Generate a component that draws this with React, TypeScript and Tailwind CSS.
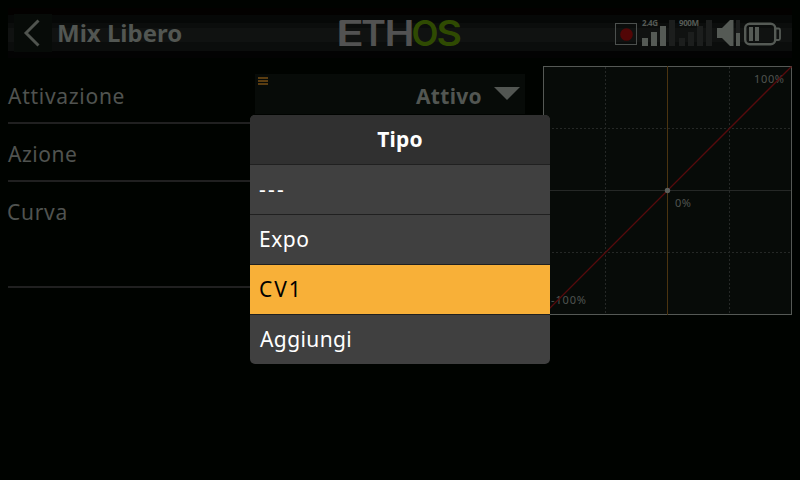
const labelText = "font-['Noto_Sans',sans-serif] text-[21px] leading-[30px] text-[#505350]";

function Logo() {
  return (
    <svg width="128" height="50" viewBox="335 8 128 50" role="img" aria-label="ETHOS">
      <defs>
        <clipPath id="logo-clip">
          <rect x="338" y="20" width="124" height="27" rx="4" />
        </clipPath>
      </defs>
      <g clipPath="url(#logo-clip)" className="font-['Inter',sans-serif] text-[35px] font-semibold">
        <text x="336" y="46" textLength="28" lengthAdjust="spacingAndGlyphs" fill="#525252">E</text>
        <text x="361" y="46" textLength="25" lengthAdjust="spacingAndGlyphs" fill="#525252">T</text>
        <text x="384.5" y="46" textLength="30" lengthAdjust="spacingAndGlyphs" fill="#525252">H</text>
        <text x="411.5" y="46" textLength="27" lengthAdjust="spacingAndGlyphs" fill="#2f4a02">O</text>
        <text x="436.5" y="46" textLength="25.5" lengthAdjust="spacingAndGlyphs" fill="#2f4a02">S</text>
      </g>
    </svg>
  );
}

function StatusIcons() {
  const on = "#555a55";
  const off = "#1c1e1d";
  return (
    <svg width="168" height="38" viewBox="615 13 168 38">
      <rect x="615.5" y="23.5" width="21" height="21" fill="none" stroke="#4c504e" />
      <circle cx="626.5" cy="34.5" r="6.3" fill="#520606" />
      <rect x="642" y="38" width="6" height="8" fill={on} />
      <rect x="651" y="32" width="6" height="14" fill={on} />
      <rect x="660" y="26" width="6" height="20" fill={on} />
      <rect x="669" y="20" width="6" height="26" fill={off} />
      <rect x="679" y="38" width="6" height="8" fill={off} />
      <rect x="688" y="32" width="6" height="14" fill={off} />
      <rect x="697" y="26" width="6" height="20" fill={off} />
      <rect x="706" y="20" width="6" height="26" fill={off} />
      <g className="font-['Noto_Sans',sans-serif] text-[8px] font-bold" fill={on}>
        <text x="642" y="26" textLength="16">2.4G</text>
        <text x="679" y="26" textLength="20">900M</text>
      </g>
      <path d="M717 28h5v10h-5zM722 28l8-8h3.500v26H730l-8-8z" fill={on} />
      <rect x="736" y="20" width="4" height="13" fill={off} />
      <rect x="736" y="33" width="4" height="13" fill={on} />
      <rect x="745.2" y="23.7" width="30" height="20.6" rx="4.5" fill="none" stroke={on} strokeWidth="2.4" />
      <path d="M776 28.500h2.500q1.500 0 1.500 1.500v8.500q0 1.500-1.500 1.500H776" fill="none" stroke={on} strokeWidth="1.8" />
      <rect x="749" y="27" width="4" height="14" fill={on} />
      <rect x="755" y="27" width="4" height="14" fill={on} />
    </svg>
  );
}

function Header() {
  return (
    <header className="mx-2 flex h-[66px] pt-2">
      <div className="relative flex h-[50px] w-full items-center bg-[linear-gradient(#030100_0_7px,#060807_7px_15px,#0b0d0c_15px_20px,#101211_20px_34px,#0b0d0c_34px_43px,#030303_43px_50px)]">
        <button className="ml-1.5 flex h-[38px] w-[38px] items-center justify-center bg-[#070b08]">
          <svg width="38" height="38" viewBox="14 14 38 38" fill="none" stroke="#50544f" strokeWidth="2.9">
            <path d="M38.500 20.500L26 33l12.500 12.500" />
          </svg>
        </button>
        <h1 className="ml-[5px] font-['Noto_Sans',sans-serif] text-[24px] leading-[30px] font-bold text-[#525652]">Mix Libero</h1>
        <div className="absolute top-0 left-[327px]"><Logo /></div>
        <div className="absolute top-[5px] left-[607px]"><StatusIcons /></div>
      </div>
    </header>
  );
}

function CurveChart() {
  return (
    <svg width="249" height="249" viewBox="543 66 249 249" shapeRendering="crispEdges">
      <rect x="543.5" y="66.5" width="248" height="248" fill="#070b08" stroke="#555955" />
      <g stroke="#252826" strokeDasharray="2 2">
        <path d="M605.5 67v247M729.5 67v247M544 128.5h247M544 252.5h247" />
      </g>
      <path d="M544 190.5h247" stroke="#252826" />
      <path d="M667.5 66v249" stroke="#4b3410" />
      <g className="font-['Noto_Sans',sans-serif] text-[11px]" fill="#505450">
        <text x="754" y="83" textLength="30">100%</text>
        <text x="675" y="207" textLength="16">0%</text>
        <text x="551" y="304" textLength="35">-100%</text>
      </g>
      <path d="M543.5 314.5l248-248" stroke="#560a0c" strokeWidth="1.3" shapeRendering="auto" />
      <circle cx="667.5" cy="190.5" r="2.7" fill="#5a5e5a" shapeRendering="auto" />
    </svg>
  );
}

function TypeDialog() {
  const row = "flex h-[50px] items-center border-t border-[#202020] pb-px";
  return (
    <div role="dialog" className="absolute top-[115px] left-[250px] h-[249px] w-[300px] overflow-hidden rounded-[5px] bg-[#404040] font-['Noto_Sans',sans-serif] text-[21px] leading-[30px] text-white">
      <div className="flex h-[49px] items-center justify-center bg-[#303030] pb-px font-bold tracking-[0.2px]">Tipo</div>
      <div className={row + " pl-[9px] tracking-[2.2px]"}>---</div>
      <div className={row + " pl-[9px] tracking-[0.5px]"}>Expo</div>
      <div className={row + " bg-[#f8b038] pl-[9px] tracking-[2px] text-black"}>CV1</div>
      <div className={row + " pl-2.5 tracking-[0.4px]"}>Aggiungi</div>
    </div>
  );
}

export default function App() {
  return (
    <div className="relative h-[480px] w-[800px] overflow-hidden bg-[#000300]">
      <Header />
      <main className="flex justify-between px-2">
        <div className="w-[517px]">
          <div className="flex h-[58px] items-center justify-between border-b-2 border-[#202020]">
            <span className={labelText + " pt-[3px] tracking-[0.72px]"}>Attivazione</span>
            <div className="flex h-10 w-[270px] bg-[#070b08] pt-[3px] pl-[3px]">
              <svg width="10" height="8" fill="#5a3d11">
                <path d="M0 0h10v2H0zM0 3h10v2H0zM0 6h10v2H0z" />
              </svg>
              <span className="mt-1 mr-3 ml-auto font-['Noto_Sans',sans-serif] text-[21px] leading-[30px] font-bold tracking-[0.3px] text-[#525652]">Attivo</span>
              <svg width="26" height="13" className="mt-2.5 mr-[5px]" fill="#525652">
                <path d="M0 0h26L13 13z" />
              </svg>
            </div>
          </div>
          <div className="flex h-[58px] items-center border-b-2 border-[#202020]">
            <span className={labelText + " pt-[3px] tracking-[0.5px]"}>Azione</span>
          </div>
          <div className="h-[106px] border-b-2 border-[#202020] pt-[15px]">
            <span className={labelText + " -ml-px tracking-[0.7px]"}>Curva</span>
          </div>
        </div>
        <CurveChart />
      </main>
      <TypeDialog />
    </div>
  );
}
